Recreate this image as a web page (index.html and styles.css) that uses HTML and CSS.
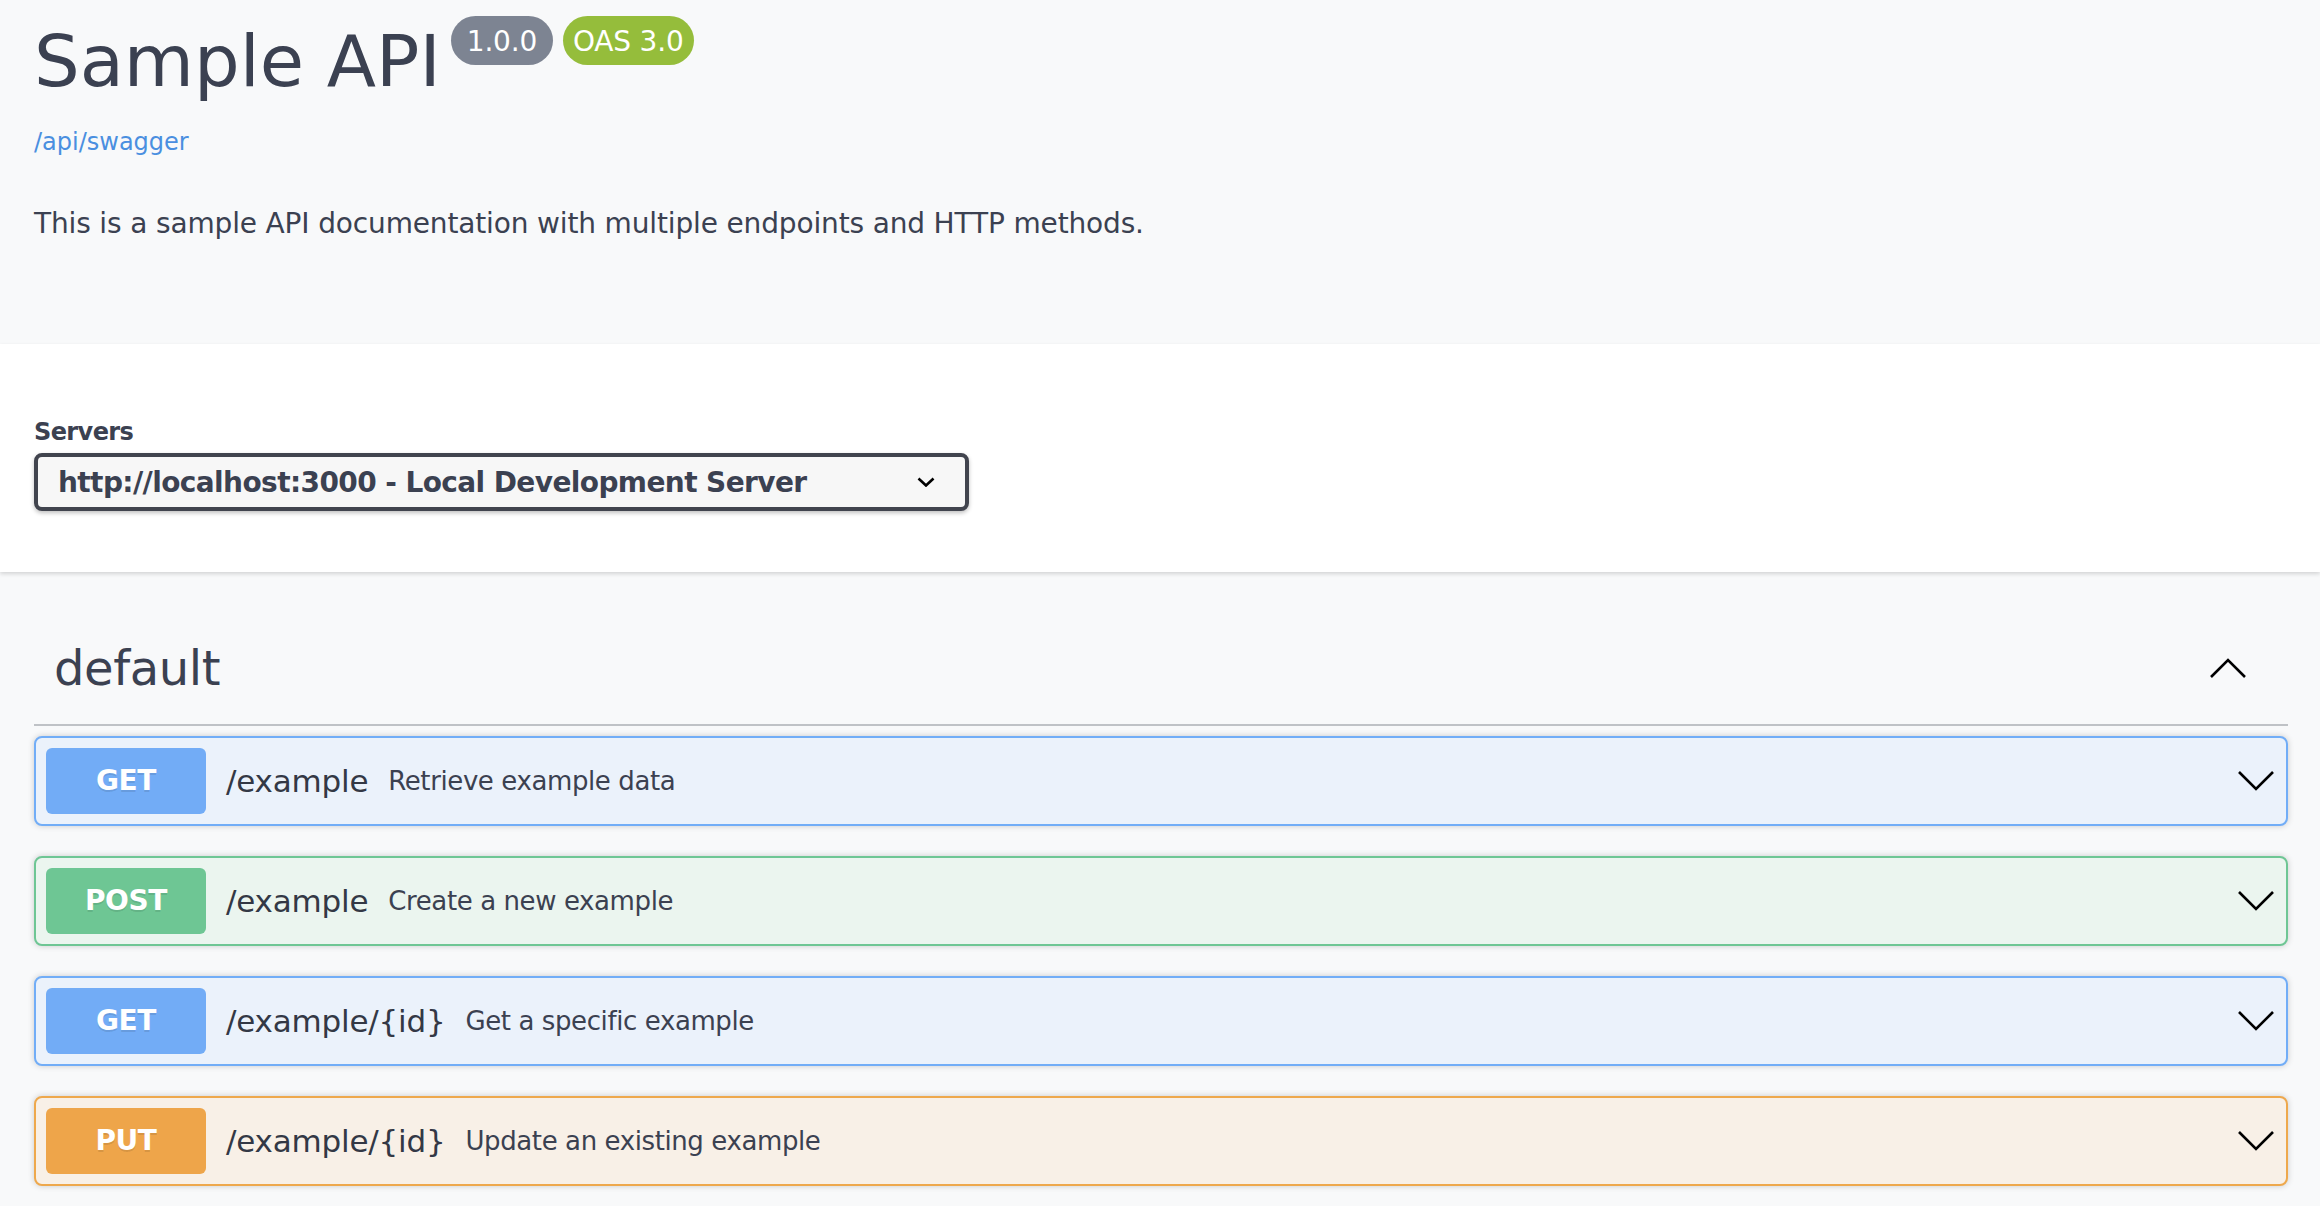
FILE: index.html
```html
<!DOCTYPE html>
<html lang="en">
<head>
<meta charset="utf-8">
<title>Sample API</title>
<link rel="stylesheet" href="styles.css">
</head>
<body>
<div class="page">
  <section class="info-section">
    <div class="wrapper">
      <div class="title-row">
        <h2 class="title">Sample API</h2>
        <span class="badge badge-version">1.0.0</span>
        <span class="badge badge-oas">OAS 3.0</span>
      </div>
      <a class="spec-link" href="#">/api/swagger</a>
      <p class="description">This is a sample API documentation with multiple endpoints and HTTP methods.</p>
    </div>
  </section>

  <section class="scheme-container">
    <div class="wrapper">
      <span class="servers-title">Servers</span>
      <div class="server-select">
        <span class="server-value">http://localhost:3000 - Local Development Server</span>
        <svg class="select-arrow" width="18" height="10" viewBox="0 0 18 10"><polyline points="1.5,1.5 9,8.5 16.5,1.5" fill="none" stroke="#000" stroke-width="2.6"/></svg>
      </div>
    </div>
  </section>

  <section class="operations">
    <div class="wrapper">
      <h3 class="tag">
        <span class="tag-name">default</span>
        <svg class="arrow" width="40" height="40" viewBox="0 0 40 40"><polyline points="3,29 20,12 37,29" fill="none" stroke="#000" stroke-width="2.6"/></svg>
      </h3>

      <div class="opblock opblock-get">
        <span class="method">GET</span>
        <span class="path">/example</span>
        <span class="summary">Retrieve example data</span>
        <svg class="arrow" width="40" height="40" viewBox="0 0 40 40"><polyline points="3,11 20,28 37,11" fill="none" stroke="#000" stroke-width="2.6"/></svg>
      </div>

      <div class="opblock opblock-post">
        <span class="method">POST</span>
        <span class="path">/example</span>
        <span class="summary">Create a new example</span>
        <svg class="arrow" width="40" height="40" viewBox="0 0 40 40"><polyline points="3,11 20,28 37,11" fill="none" stroke="#000" stroke-width="2.6"/></svg>
      </div>

      <div class="opblock opblock-get">
        <span class="method">GET</span>
        <span class="path">/example/{id}</span>
        <span class="summary">Get a specific example</span>
        <svg class="arrow" width="40" height="40" viewBox="0 0 40 40"><polyline points="3,11 20,28 37,11" fill="none" stroke="#000" stroke-width="2.6"/></svg>
      </div>

      <div class="opblock opblock-put">
        <span class="method">PUT</span>
        <span class="path">/example/{id}</span>
        <span class="summary">Update an existing example</span>
        <svg class="arrow" width="40" height="40" viewBox="0 0 40 40"><polyline points="3,11 20,28 37,11" fill="none" stroke="#000" stroke-width="2.6"/></svg>
      </div>
    </div>
  </section>
</div>
</body>
</html>
```

FILE: styles.css
```css
* {
  box-sizing: border-box;
}

html, body {
  margin: 0;
  padding: 0;
}

body {
  background: #f8f9fa;
  color: #3b4151;
  font-family: "DejaVu Sans", "Noto Sans", sans-serif;
}

.page {
  width: 100%;
  overflow: hidden;
}

.wrapper {
  padding: 0 32px 0 34px;
}

/* ---------- info ---------- */
.info-section {
  height: 344px;
  padding-top: 16px;
  background: #f8f9fa;
}

.title-row {
  display: flex;
  align-items: flex-start;
}

.title {
  margin: 0;
  font-size: 72px;
  font-weight: 400;
  line-height: 90px;
  letter-spacing: 0;
  color: #3b4151;
}

.badge {
  display: inline-block;
  height: 49px;
  padding: 5px 0 3px;
  border-radius: 57px;
  color: #fff;
  font-size: 28px;
  line-height: 41px;
  letter-spacing: -0.2px;
}

.badge-version {
  margin-left: 10px;
  padding-left: 16px;
  padding-right: 16px;
  background: #7d8492;
}

.badge-oas {
  margin-left: 10px;
  padding-left: 10px;
  padding-right: 10px;
  background: #95bd3b;
}

.spec-link {
  display: block;
  margin-top: 18px;
  font-size: 24px;
  line-height: 36px;
  color: #4a8fe0;
  text-decoration: none;
}

.description {
  margin: 43px 0 0;
  font-size: 28px;
  line-height: 42px;
  letter-spacing: -0.15px;
  color: #3b4151;
}

/* ---------- servers ---------- */
.scheme-container {
  background: #fff;
  box-shadow: 0 2px 4px 0 rgba(0, 0, 0, 0.15);
  padding: 60px 0 61px;
  position: relative;
}

.servers-title {
  display: block;
  margin-top: 10px;
  font-size: 24px;
  font-weight: 700;
  line-height: 36px;
  letter-spacing: -0.6px;
}

.server-select {
  display: flex;
  align-items: center;
  justify-content: space-between;
  width: 935px;
  height: 58px;
  margin-top: 3px;
  padding: 0 30px 0 20px;
  background: #f7f7f7;
  border: 4px solid #41444e;
  border-radius: 8px;
  box-shadow: 0 2px 4px 0 rgba(0, 0, 0, 0.25);
}

.server-value {
  font-size: 28px;
  font-weight: 700;
  letter-spacing: -0.6px;
  color: #3b4151;
  white-space: nowrap;
}

.select-arrow {
  flex: none;
}

/* ---------- operations ---------- */
.operations {
  padding-top: 40px;
}

.tag {
  display: flex;
  align-items: center;
  margin: 0 0 10px;
  padding: 20px 40px 20px 20px;
  border-bottom: 2px solid rgba(59, 65, 81, 0.3);
  font-size: 48px;
  font-weight: 400;
  line-height: 72px;
  color: #3b4151;
}

.tag-name {
  flex: 1;
  letter-spacing: -0.4px;
}

.arrow {
  flex: none;
  display: block;
}

.opblock {
  display: flex;
  align-items: center;
  height: 90px;
  margin-bottom: 30px;
  padding: 0 10px;
  border: 2px solid;
  border-radius: 8px;
  box-shadow: 0 0 6px rgba(0, 0, 0, 0.19);
}

.method {
  flex: none;
  width: 160px;
  height: 66px;
  padding: 12px 0;
  border-radius: 6px;
  color: #fff;
  font-size: 28px;
  font-weight: 700;
  line-height: 42px;
  text-align: center;
  letter-spacing: -0.4px;
  text-shadow: 0 2px 0 rgba(0, 0, 0, 0.1);
}

.path {
  flex: none;
  padding: 0 20px;
  font-size: 31px;
  line-height: 40px;
  letter-spacing: -0.2px;
  color: #333845;
}

.summary {
  flex: 1;
  font-size: 26px;
  line-height: 36px;
  letter-spacing: -0.4px;
  color: #3b4151;
}

.opblock-get {
  background: #ebf2fb;
  border-color: #71adf7;
}

.opblock-get .method {
  background: #72acf6;
}

.opblock-post {
  background: #ebf5ef;
  border-color: #6ec694;
}

.opblock-post .method {
  background: #6ec694;
}

.opblock-put {
  background: #f8f0e7;
  border-color: #eea84c;
}

.opblock-put .method {
  background: #eea54a;
}
```
